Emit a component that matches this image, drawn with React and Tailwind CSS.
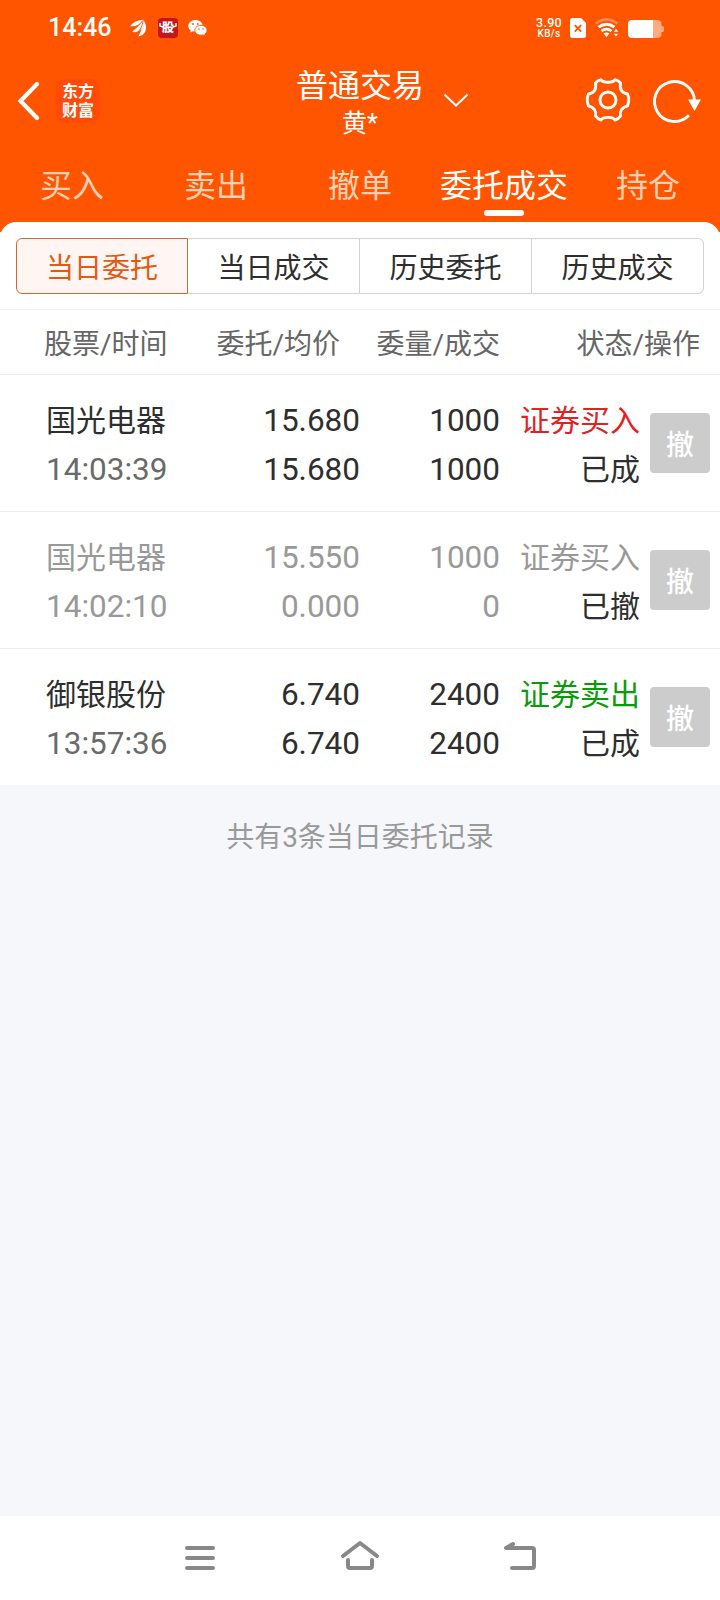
import React from "react";

const tabs = ["买入", "卖出", "撤单", "委托成交", "持仓"];
const segments = ["当日委托", "当日成交", "历史委托", "历史成交"];
const orders = [
  { name: "国光电器", time: "14:03:39", price: "15.680", avg: "15.680", qty: "1000", filled: "1000", side: "证券买入", sideColor: "text-[#e3211f]", state: "已成" },
  { name: "国光电器", time: "14:02:10", price: "15.550", avg: "0.000", qty: "1000", filled: "0", side: "证券买入", sideColor: "text-[#999999]", state: "已撤", muted: true },
  { name: "御银股份", time: "13:57:36", price: "6.740", avg: "6.740", qty: "2400", filled: "2400", side: "证券卖出", sideColor: "text-[#0a9b0a]", state: "已成" },
];

function StatusBar() {
  return (
    <div className="flex h-14 items-center pl-12 pr-14">
      <span className="w-[81px] text-[25px] font-medium leading-[30px]">14:46</span>
      <svg className="h-5 w-5" viewBox="0 0 20 20" fill="#fff">
        <path d="M1 8.300C3.500 4.500 8 2.300 14 1.800C12.500 5.500 9.500 7.600 6.500 8C4.500 8.200 2.500 8.200 1 8.300Z" />
        <path d="M3 13.800C6.500 11 10.500 7.500 14 2C14.700 6.500 13.500 10.500 10.300 12.700C8.200 14.100 5.500 14.500 3 13.800Z" />
        <path d="M9.500 18.300C12 13.500 13.800 8 14.300 2C17.800 6.500 18 12.500 14.700 15.800C13.300 17.200 11.500 17.900 9.500 18.300Z" />
        <path d="M3.500 9.700C7.500 9 11 6.500 13.500 2.800M7.500 15.500C11 12.500 13.500 8 14.100 3" fill="none" stroke="#ff5500" strokeWidth="0.900" />
      </svg>
      <div className="ml-[9px] flex h-5 w-5 items-center justify-center rounded-[4px] bg-[#c4161c] text-[12px] font-black leading-none">
        <svg className="-mr-px h-3 w-1 shrink-0" viewBox="0 0 4 12" fill="none" stroke="#fff" strokeWidth="1.500"><path d="M1 1V4L4 5" /></svg>
        股
        <svg className="-ml-px h-3 w-1 shrink-0" viewBox="0 0 4 12" fill="none" stroke="#fff" strokeWidth="1.500"><path d="M3 1V4L0 5" /></svg>
      </div>
      <svg className="ml-[10px] h-5 w-5" viewBox="0 0 20 20">
        <path d="M7.500 2C3.500 2 0.300 4.500 0.300 7.900C0.300 9.800 1.300 11.400 2.800 12.400L2.200 14.600L4.800 13.300C5.700 13.600 6.600 13.700 7.500 13.700C11.500 13.700 14.600 11.100 14.600 7.900C14.600 4.500 11.500 2 7.500 2Z" fill="#fff" />
        <path d="M13 7.300C9.500 7.300 6.800 9.500 6.800 12.300C6.800 15.100 9.500 17.200 13 17.200C13.700 17.200 14.500 17.100 15.100 16.900L17.300 18L16.800 16.100C18.200 15.200 19 13.900 19 12.300C19 9.500 16.300 7.300 13 7.300Z" fill="#fff" stroke="#ff5500" strokeWidth="0.900" />
        <g fill="#ff5500"><circle cx="5" cy="6" r="0.900" /><circle cx="9.700" cy="6" r="0.900" /><circle cx="11" cy="11" r="0.800" /><circle cx="15" cy="11" r="0.800" /></g>
      </svg>
      <div className="ml-auto flex items-center">
        <div className="flex w-[26px] flex-col items-center font-medium">
          <span className="text-[12.500px] leading-[12px] tracking-[0.3px]">3.90</span>
          <span className="text-[10px] leading-[10px] tracking-[0.3px]">KB/s</span>
        </div>
        <svg className="ml-2 h-5 w-4" viewBox="0 0 16 20">
          <path d="M2.500 0H11L16 5V17.500Q16 20 13.500 20H2.500Q0 20 0 17.500V2.500Q0 0 2.500 0Z" fill="#fff" />
          <path d="M4.800 7.200L11.200 13.600M11.200 7.200L4.800 13.600" stroke="#ff5500" strokeWidth="1.900" />
        </svg>
        <svg className="ml-[9px] h-5 w-6" viewBox="0 0 24 20" fill="none">
          <path d="M0.800 5.500Q11.500 -2.500 22.500 5.500" stroke="#fff" strokeOpacity="0.350" strokeWidth="2.200" />
          <path d="M3.500 9.200Q11.500 3.300 19.500 9.200" stroke="#fff" strokeWidth="2.800" />
          <path d="M6.500 13Q11.500 9.200 16.500 13" stroke="#fff" strokeWidth="2.800" />
          <path d="M8.500 15.500Q11.500 13.300 14.500 15.500L11.500 19Z" fill="#fff" />
          <path d="M18.800 13.700L21 10.800L23.200 13.700ZM18.800 15.700L21 18.600L23.200 15.700Z" fill="#fff" />
        </svg>
        <svg className="ml-[9px] mt-px h-[18px] w-9" viewBox="0 0 36 18">
          <path d="M25 0H29.500Q33.500 0 33.500 4V6H34.500Q36 6 36 7.500V10.500Q36 12 34.500 12H33.500V14Q33.500 18 29.500 18H25Z" fill="#ffaa80" />
          <path d="M4 0H25V18H4Q0 18 0 14V4Q0 0 4 0Z" fill="#fff" />
        </svg>
      </div>
    </div>
  );
}

function TitleBar() {
  return (
    <div className="grid h-[90px] grid-cols-[1fr_auto_1fr] items-center">
      <div className="flex items-center pl-[17px]">
        <svg className="h-10 w-6" viewBox="0 0 24 40" fill="none" stroke="#fff" strokeWidth="4.200">
          <path d="M20 3L3.500 20L20 37" strokeLinecap="round" />
        </svg>
        <div className="ml-[15px] flex h-11 w-11 flex-col items-center rounded-[9px] bg-[#ff4a08] pt-px font-['Noto_Sans_CJK_SC',sans-serif] text-[16px] font-bold leading-[20px]">
          <span className="h-[19px]">东方</span>
          <span className="h-[19px]">财富</span>
        </div>
      </div>
      <div className="flex flex-col items-center pt-[5px]">
        <span className="text-[32px] leading-[40px]">普通交易</span>
        <span className="mt-px text-[25px] leading-[34px]">黄*</span>
      </div>
      <div className="flex items-center pl-[18px] pr-[19px]">
        <svg className="h-4 w-7" viewBox="0 0 28 16" fill="none" stroke="#fff" strokeWidth="2">
          <path d="M2.500 1.500L14 12.500L25.500 1.500" />
        </svg>
        <svg className="ml-auto h-12 w-12" viewBox="0 0 48 48" fill="none" stroke="#fff" strokeWidth="2.900" strokeLinejoin="round">
          <path d="M17 2.700C19 6 29 6 31 2.700Q34.500 3.500 36.500 6C35.500 12 38 16 43.500 17Q46 22.500 43.500 29C38 30 35.500 34 36.500 39Q34.500 42 31 43C29 39.500 19 39.500 17 43Q13.500 42 11.500 39C12.500 34 10 30 4.500 29Q2 22.500 4.500 17C10 16 12.500 12 11.500 6Q13.500 3.500 17 2.700Z" />
          <circle cx="24" cy="23" r="8" />
        </svg>
        <svg className="ml-[18px] h-12 w-[51px]" viewBox="0 0 51 48">
          <path d="M39 38.300A20 20 0 1 1 44.500 24" fill="none" stroke="#fff" strokeWidth="2.900" />
          <path d="M38 22.500H51L44.500 34Z" fill="#fff" />
        </svg>
      </div>
    </div>
  );
}

function OrderRow({ order }) {
  const main = order.muted ? "text-[#999999]" : "text-[#2e2e2e]";
  const sub = order.muted ? "text-[#999999]" : "text-[#6a6a6a]";
  return (
    <div className="flex h-[137px] items-center border-b border-[#ebebeb] pl-[46px] pr-[10px] last:h-[136px] last:border-b-0">
      <div className="flex w-[134px] flex-col pt-[3px]">
        <span className={`text-[30px] leading-[49px] ${main}`}>{order.name}</span>
        <span className={`text-[31.500px] leading-[49px] ${sub}`}>{order.time}</span>
      </div>
      <div className={`flex w-[180px] flex-col pt-[3px] text-right text-[31.500px] leading-[49px] ${main}`}>
        <span>{order.price}</span>
        <span>{order.avg}</span>
      </div>
      <div className={`flex w-[140px] flex-col pt-[3px] text-right text-[31.500px] leading-[49px] ${main}`}>
        <span>{order.qty}</span>
        <span>{order.filled}</span>
      </div>
      <div className="flex w-[140px] flex-col pt-[3px] text-right text-[30px] leading-[49px]">
        <span className={order.sideColor}>{order.side}</span>
        <span className="text-[#2e2e2e]">{order.state}</span>
      </div>
      <button className="ml-[10px] flex h-[60px] w-[60px] items-center justify-center rounded-[4px] bg-[#cccccc] pt-[5px] text-[28px] font-medium leading-[55px] text-white">撤</button>
    </div>
  );
}

export default function App() {
  return (
    <div className="flex h-[1600px] w-[720px] flex-col bg-[#f6f7fa] font-[Roboto,'Noto_Sans_CJK_SC',sans-serif]">
      <header className="h-[232px] shrink-0 bg-[#ff5500] text-white">
        <StatusBar />
        <TitleBar />
        <nav className="grid h-[76px] grid-cols-5">
          {tabs.map((t) => (
            <div key={t} className="flex flex-col items-center pt-[18px]">
              <span className={`text-[32px] leading-[44px] ${t === "委托成交" ? "text-white" : "text-[#ffd0b3]"}`}>{t}</span>
              {t === "委托成交" && <span className="mt-[2px] h-[6px] w-10 rounded-full bg-white" />}
            </div>
          ))}
        </nav>
      </header>

      <main className="-mt-[10px] flex-1">
        <div className="rounded-t-[16px] bg-white">
          <div className="flex h-[88px] border-b border-[#f2f2f2] px-4 pt-4">
            {segments.map((s, i) => (
              <div
                key={s}
                className={`flex h-14 w-[172px] items-center justify-center border pt-[5px] text-[28px] ${
                  i === 0
                    ? "rounded-l-[6px] border-[#cf6a35] bg-[#fff5f2] text-[#e25a10]"
                    : "border-l-0 border-[#d2d3d5] text-[#2e2e2e] last:rounded-r-[6px]"
                }`}
              >
                {s}
              </div>
            ))}
          </div>
          <div className="flex h-[65px] items-center border-b border-[#ebebeb] pl-11 pr-5 pt-[5px] text-[28px] text-[#666666]">
            <span className="w-[136px]">股票/时间</span>
            <span className="w-40 text-right">委托/均价</span>
            <span className="w-40 text-right">委量/成交</span>
            <span className="w-[200px] text-right">状态/操作</span>
          </div>
          <div>
            {orders.map((o) => (
              <OrderRow key={o.time} order={o} />
            ))}
          </div>
        </div>
        <p className="pt-8 text-center text-[28px] leading-[42px] text-[#999999]">共有3条当日委托记录</p>
      </main>

      <footer className="flex h-[84px] shrink-0 items-center justify-center gap-[120px] bg-white text-[#888888]">
        <svg className="h-10 w-10" viewBox="0 0 40 40" fill="none" stroke="currentColor" strokeWidth="4" strokeLinecap="round">
          <path d="M7 10H33M7 20H33M7 30H33" />
        </svg>
        <svg className="h-10 w-10" viewBox="0 0 40 40" fill="none" stroke="currentColor" strokeWidth="4" strokeLinecap="round" strokeLinejoin="round">
          <path d="M3 18L20 5L37 18M8 22V28Q8 30 10 30H30Q32 30 32 28V22" />
        </svg>
        <svg className="h-10 w-10" viewBox="0 0 40 40" fill="none" stroke="currentColor" strokeWidth="4" strokeLinecap="round" strokeLinejoin="round">
          <path d="M13 6L6 10H32Q34 10 34 12V28Q34 30 32 30H12" />
        </svg>
      </footer>
    </div>
  );
}
